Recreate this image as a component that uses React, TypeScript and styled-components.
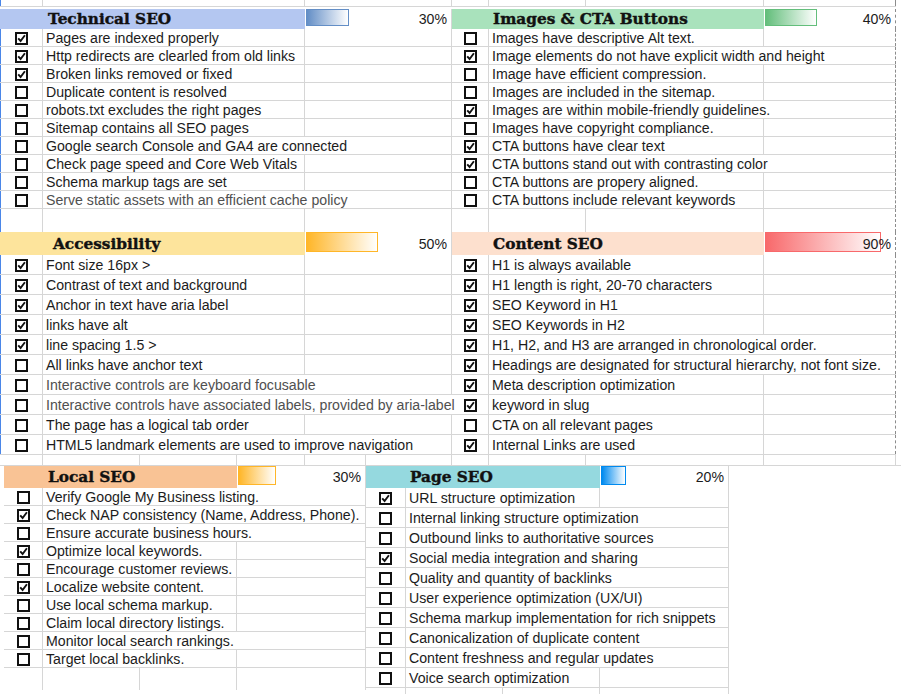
import React from 'react';
import styled, { createGlobalStyle } from 'styled-components';

const GRID = '#d6d6d6';

const Global = createGlobalStyle`
  html, body { margin: 0; padding: 0; background: #fff; }
  body {
    font-family: "Liberation Sans", Arial, sans-serif;
    font-size: 14.15px;
    color: #1f1f1f;
  }
  * { box-sizing: border-box; }
`;

type Item = { text: string; done: boolean; muted?: boolean };
type SectionData = {
  title: string;
  band: string;
  bar: string;
  indent: number;
  items: Item[];
};

const mk = (rows: [string, number, number?][]): Item[] =>
  rows.map(([text, d, m]) => ({ text, done: d === 1, muted: m === 1 }));

const technical: SectionData = {
  title: 'Technical SEO',
  band: '#b4c7f1',
  bar: '#638ec6',
  indent: 5,
  items: mk([
    ['Pages are indexed properly', 1],
    ['Http redirects are clearled from old links', 1],
    ['Broken links removed or fixed', 1],
    ['Duplicate content is resolved', 0],
    ['robots.txt excludes the right pages', 0],
    ['Sitemap contains all SEO pages', 0],
    ['Google search Console and GA4 are connected', 0],
    ['Check page speed and Core Web Vitals', 0],
    ['Schema markup tags are set', 0],
    ['Serve static assets with an efficient cache policy', 0, 1],
  ]),
};

const images: SectionData = {
  title: 'Images & CTA Buttons',
  band: '#a9e2bc',
  bar: '#63be7b',
  indent: 4,
  items: mk([
    ['Images have descriptive Alt text.', 0],
    ['Image elements do not have explicit width and height', 1],
    ['Image have efficient compression.', 0],
    ['Images are included in the sitemap.', 0],
    ['Images are within mobile-friendly guidelines.', 1],
    ['Images have copyright compliance.', 0],
    ['CTA buttons have clear text', 1],
    ['CTA buttons stand out with contrasting color', 1],
    ['CTA buttons are propery aligned.', 0],
    ['CTA buttons include relevant keywords', 0],
  ]),
};

const accessibility: SectionData = {
  title: 'Accessibility',
  band: '#fde49c',
  bar: '#ffb628',
  indent: 10,
  items: mk([
    ['Font size 16px >', 1],
    ['Contrast of text and background', 1],
    ['Anchor in text have aria label', 1],
    ['links have alt', 1],
    ['line spacing 1.5 >', 1],
    ['All links have anchor text', 0],
    ['Interactive controls are keyboard focusable', 0, 1],
    ['Interactive controls have associated labels, provided by aria-label', 0, 1],
    ['The page has a logical tab order', 0],
    ['HTML5 landmark elements are used to improve navigation', 0],
  ]),
};

const content: SectionData = {
  title: 'Content SEO',
  band: '#fde0ce',
  bar: '#f8696b',
  indent: 4,
  items: mk([
    ['H1 is always available', 1],
    ['H1 length is right, 20-70 characters', 1],
    ['SEO Keyword in H1', 1],
    ['SEO Keywords in H2', 1],
    ['H1, H2, and H3 are arranged in chronological order.', 1],
    ['Headings are designated for structural hierarchy, not font size.', 1],
    ['Meta description optimization', 1],
    ['keyword in slug', 1],
    ['CTA on all relevant pages', 0],
    ['Internal Links are used', 1],
  ]),
};

const local: SectionData = {
  title: 'Local SEO',
  band: '#f9c395',
  bar: '#ffb628',
  indent: 5,
  items: mk([
    ['Verify Google My Business listing.', 0],
    ['Check NAP consistency (Name, Address, Phone).', 1],
    ['Ensure accurate business hours.', 0],
    ['Optimize local keywords.', 1],
    ['Encourage customer reviews.', 0],
    ['Localize website content.', 1],
    ['Use local schema markup.', 0],
    ['Claim local directory listings.', 0],
    ['Monitor local search rankings.', 0],
    ['Target local backlinks.', 0],
  ]),
};

const page: SectionData = {
  title: 'Page SEO',
  band: '#95d9df',
  bar: '#008aef',
  indent: 4,
  items: mk([
    ['URL structure optimization', 1],
    ['Internal linking structure optimization', 0],
    ['Outbound links to authoritative sources', 0],
    ['Social media integration and sharing', 1],
    ['Quality and quantity of backlinks', 0],
    ['User experience optimization (UX/UI)', 0],
    ['Schema markup implementation for rich snippets', 0],
    ['Canonicalization of duplicate content', 0],
    ['Content freshness and regular updates', 0],
    ['Voice search optimization', 0],
  ]),
};

/* ---------- styled parts ---------- */

const Sheet = styled.div`
  width: 901px;
  height: 694px;
  overflow: hidden;
  background: #fff;
`;

const Block = styled.div<{ $pl?: number }>`
  display: flex;
  align-items: flex-start;
  padding-left: ${(p) => p.$pl ?? 0}px;
`;

const SectionBox = styled.div<{ $w: number }>`
  width: ${(p) => p.$w}px;
  display: flex;
  flex-direction: column;
`;

const GridRow = styled.div<{
  $cols: string;
  $h: number;
  $edge?: boolean;
  $dashed?: boolean;
  $open?: boolean;
  $gap?: number;
}>`
  display: grid;
  grid-template-columns: ${(p) => p.$cols};
  height: ${(p) => p.$h}px;
  margin-bottom: ${(p) => p.$gap ?? 0}px;
  border-bottom: ${(p) => (p.$open ? 'none' : `1px solid ${GRID}`)};
  box-shadow: ${(p) => (p.$edge ? 'inset 1px 0 0 #4a86e8' : 'none')};
  & > *:last-child {
    border-right: 1px ${(p) => (p.$dashed ? 'dashed #8c8c8c' : `solid ${GRID}`)};
  }
`;

const Cell = styled.div`
  border-right: 1px solid ${GRID};
  min-width: 0;
`;

const CheckCell = styled(Cell)`
  display: flex;
  align-items: center;
  justify-content: center;
  padding-top: 2px;
`;

const TextCell = styled(Cell)`
  display: flex;
  align-items: stretch;
`;

const Label = styled.span<{ $muted?: boolean; $pb: number }>`
  position: relative;
  z-index: 1;
  background: #fff;
  display: flex;
  align-items: flex-end;
  white-space: nowrap;
  padding: 0 3px ${(p) => p.$pb}px 3px;
  line-height: 16px;
  color: ${(p) => (p.$muted ? '#505050' : '#1c1c1c')};
`;

const Box = styled.span`
  width: 13px;
  height: 13px;
  border: 2px solid #111;
  background: #fff;
  display: inline-flex;
  align-items: center;
  justify-content: center;
`;

const HeaderRow = styled.div<{ $cols: string; $h: number }>`
  display: grid;
  grid-template-columns: ${(p) => p.$cols};
  height: ${(p) => p.$h}px;
`;

const Band = styled.div<{ $bg: string; $indent: number; $span: number }>`
  grid-column: span ${(p) => p.$span};
  background: ${(p) => p.$bg};
  display: flex;
  align-items: center;
  padding-left: ${(p) => p.$indent}px;
  font-family: "DejaVu Serif", "Liberation Serif", serif;
  font-weight: bold;
  font-size: 15.3px;
  color: #111;
  -webkit-text-stroke: 0.4px #111;
  white-space: nowrap;
`;

const BarCell = styled.div<{ $dashed?: boolean }>`
  display: grid;
  padding: 0 1px;
  background: #fff;
  border-right: 1px ${(p) => (p.$dashed ? 'dashed #8c8c8c' : `solid ${GRID}`)};
`;

const Bar = styled.div<{ $c: string; $h: number }>`
  grid-area: 1 / 1;
  justify-self: start;
  align-self: start;
  height: ${(p) => p.$h}px;
  border: 1px solid ${(p) => p.$c};
  background: linear-gradient(to right, ${(p) => p.$c}, #ffffff);
`;

const Pct = styled.span`
  grid-area: 1 / 1;
  justify-self: end;
  align-self: center;
  margin-right: 3px;
  position: relative;
  color: #1c1c1c;
`;

/* ---------- components ---------- */

const Check: React.FC<{ on: boolean }> = ({ on }) => (
  <Box>
    {on && (
      <svg width="9" height="9" viewBox="0 0 9 9">
        <path d="M1.2 4.4 L3.6 7 L7.9 1.3" fill="none" stroke="#111" strokeWidth="1.9" />
      </svg>
    )}
  </Box>
);

type Layout = {
  cols: number[];
  bandSpan: number;
  headH: number;
  rowH: number;
  edge?: boolean;
  dashed?: boolean;
  topStrip?: boolean;
  trailH?: number;
};

const px = (c: number[]) => c.map((v) => `${v}px`).join(' ');

const Blank: React.FC<{ cols: number[]; h: number; edge?: boolean; dashed?: boolean; open?: boolean; gap?: number }> = ({
  cols,
  h,
  edge,
  dashed,
  open,
  gap,
}) => (
  <GridRow $cols={px(cols)} $h={h} $edge={edge} $dashed={dashed} $open={open} $gap={gap}>
    {cols.map((_, i) => (
      <Cell key={i} />
    ))}
  </GridRow>
);

const Section: React.FC<{ data: SectionData; layout: Layout }> = ({ data, layout }) => {
  const { cols, bandSpan, headH, rowH, edge, dashed, topStrip, trailH } = layout;
  const width = cols.reduce((a, b) => a + b, 0);
  const pct = Math.round((data.items.filter((i) => i.done).length / data.items.length) * 100);
  const headCols = `${cols.slice(0, bandSpan).reduce((a, b) => a + b, 0)}px ${cols
    .slice(bandSpan)
    .reduce((a, b) => a + b, 0)}px`;
  const pb = rowH >= 20 ? 1 : 0;
  return (
    <SectionBox $w={width}>
      {topStrip && <Blank cols={cols} h={7} edge={edge} dashed={dashed} gap={2} />}
      <HeaderRow $cols={headCols} $h={headH}>
        <Band $bg={data.band} $indent={cols[0] + data.indent} $span={1}>
          {data.title}
        </Band>
        <BarCell $dashed={dashed}>
          <Bar $c={data.bar} $h={headH - 3} style={{ width: `${pct}%` }} />
          <Pct>{pct}%</Pct>
        </BarCell>
      </HeaderRow>
      {data.items.map((it, i) => (
        <GridRow key={i} $cols={px(cols)} $h={rowH} $edge={edge} $dashed={dashed}>
          <CheckCell>
            <Check on={it.done} />
          </CheckCell>
          <TextCell>
            <Label $muted={it.muted} $pb={pb}>
              {it.text}
            </Label>
          </TextCell>
          {cols.slice(2).map((_, j) => (
            <Cell key={j} />
          ))}
        </GridRow>
      ))}
      {trailH ? <Blank cols={cols} h={trailH} edge={edge} dashed={dashed} open /> : null}
    </SectionBox>
  );
};

const LEFT = [43, 262, 147];
const RIGHT = [37, 97, 178, 132];
const LOCAL = [39, 97, 97, 129];
const PAGE = [40, 97, 97, 129];
const UNIVERSAL = [43, 97, 97, 68, 61, 86, 37, 97, 178, 132];

export default function App() {
  return (
    <>
      <Global />
      <Sheet>
        <Block>
          <Section
            data={technical}
            layout={{ cols: LEFT, bandSpan: 2, headH: 20, rowH: 18, edge: true, topStrip: true, trailH: 23 }}
          />
          <Section
            data={images}
            layout={{ cols: RIGHT, bandSpan: 3, headH: 20, rowH: 18, dashed: true, topStrip: true, trailH: 23 }}
          />
        </Block>
        <Block>
          <Section data={accessibility} layout={{ cols: LEFT, bandSpan: 2, headH: 23, rowH: 20, edge: true }} />
          <Section data={content} layout={{ cols: RIGHT, bandSpan: 3, headH: 23, rowH: 20, dashed: true }} />
        </Block>
        <Blank cols={UNIVERSAL} h={11} />
        <Block $pl={4}>
          <Section data={local} layout={{ cols: LOCAL, bandSpan: 3, headH: 22, rowH: 18, trailH: 22 }} />
          <Section data={page} layout={{ cols: PAGE, bandSpan: 3, headH: 22, rowH: 20, trailH: 6 }} />
        </Block>
      </Sheet>
    </>
  );
}
